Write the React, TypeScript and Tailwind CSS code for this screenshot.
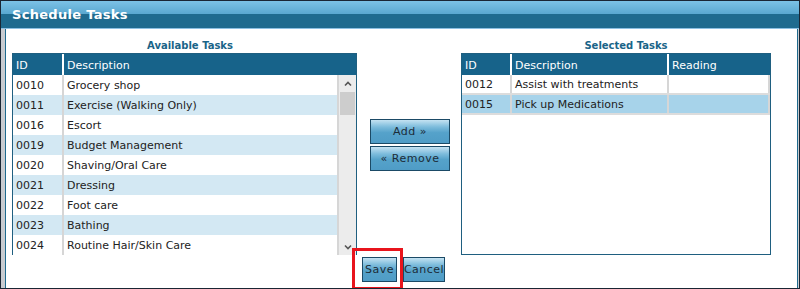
import React from 'react';

type Task = { id: string; desc: string };

const available: Task[] = [
  { id: '0010', desc: 'Grocery shop' },
  { id: '0011', desc: 'Exercise (Walking Only)' },
  { id: '0016', desc: 'Escort' },
  { id: '0019', desc: 'Budget Management' },
  { id: '0020', desc: 'Shaving/Oral Care' },
  { id: '0021', desc: 'Dressing' },
  { id: '0022', desc: 'Foot care' },
  { id: '0023', desc: 'Bathing' },
  { id: '0024', desc: 'Routine Hair/Skin Care' },
];

const selected: Task[] = [
  { id: '0012', desc: 'Assist with treatments' },
  { id: '0015', desc: 'Pick up Medications' },
];

const btn =
  'h-[25px] border border-[#1b4a66] bg-[linear-gradient(to_bottom,#c4e2f2_0%,#7dbcdc_30%,#55a2ca_55%,#4f9cc6_100%)] text-[11px] text-[#1c2c38] tracking-[0.5px] flex items-center justify-center pt-[1px]';

const cell = 'flex items-center pl-[3px] pt-[2px]';
const headCell = 'flex items-center pl-[3px] pt-[3px]';

const App: React.FC = () => {
  return (
    <div className="w-[800px] h-[289px] bg-white border border-[#1a2634] flex flex-col font-['DejaVu_Sans',sans-serif] overflow-hidden">
      <div className="h-[28px] shrink-0 bg-[linear-gradient(to_bottom,#7cc2e6_0%,#5aa8d0_48%,#1f6b8f_49%,#1f6b8f_100%)] border-b border-[#8cc0e2] flex items-center pl-[11px] pt-[1px]">
        <span className="text-white font-bold text-[13px] tracking-[0.3px]">Schedule Tasks</span>
      </div>

      <div className="flex-1 flex border-l-4 border-r border-[#c8cbd0]">
        <div className="flex-1 border-l border-r border-[#1e6a8e] flex flex-col pt-[8px]">
          <div className="flex">
            {/* Available tasks */}
            <div className="ml-[6px] w-[345px] flex flex-col">
              <div className="h-[16px] text-center text-[10px] font-bold text-[#1a6488] leading-[16px] pl-[11px] pt-[1px]">Available Tasks</div>
              <div className="h-[202px] border border-[#1f5f80] flex flex-col">
                <div className="h-[21px] shrink-0 bg-[#17638a] flex text-white text-[11px]">
                  <div className={`w-[51px] border-r-2 border-white ${headCell}`}>ID</div>
                  <div className={`flex-1 ${headCell}`}>Description</div>
                </div>
                <div className="flex-1 flex">
                  <div className="flex-1">
                    {available.map((t, i) => (
                      <div key={t.id} className={`h-[20px] flex text-[11px] text-[#222] ${i % 2 === 1 ? 'bg-[#d3e8f3]' : 'bg-white'}`}>
                        <div className={`w-[51px] border-r-2 border-[#d6d6d6] ${cell}`}>{t.id}</div>
                        <div className={`flex-1 border-r-2 border-[#d6d6d6] ${cell}`}>{t.desc}</div>
                      </div>
                    ))}
                  </div>
                  <div className="w-[17px] bg-[#ececec] flex flex-col items-center">
                    <svg width="10" height="10" viewBox="0 0 10 10" className="mt-[4px]">
                      <path d="M2 6.5 L5 3.5 L8 6.5" stroke="#555" strokeWidth="1.6" fill="none" />
                    </svg>
                    <div className="w-[15px] h-[23px] bg-[#cdcdcd] mt-[3px]" />
                    <div className="flex-1" />
                    <svg width="10" height="10" viewBox="0 0 10 10" className="mb-[3px]">
                      <path d="M2 3.5 L5 6.5 L8 3.5" stroke="#555" strokeWidth="1.6" fill="none" />
                    </svg>
                  </div>
                </div>
              </div>
            </div>

            {/* Middle buttons */}
            <div className="w-[104px] flex flex-col items-center pt-[82px] gap-[2px] pl-[2px]">
              <button className={`${btn} w-[80px]`}>Add »</button>
              <button className={`${btn} w-[80px]`}>« Remove</button>
            </div>

            {/* Selected tasks */}
            <div className="w-[310px] flex flex-col">
              <div className="h-[16px] text-center text-[10px] font-bold text-[#1a6488] leading-[16px] pl-[20px] pt-[1px]">Selected Tasks</div>
              <div className="h-[202px] border border-[#1f5f80] flex flex-col">
                <div className="h-[21px] shrink-0 bg-[#17638a] flex text-white text-[11px]">
                  <div className={`w-[50px] border-r-2 border-white ${headCell}`}>ID</div>
                  <div className={`w-[157px] border-r-2 border-white ${headCell}`}>Description</div>
                  <div className={`flex-1 ${headCell}`}>Reading</div>
                </div>
                {selected.map((t, i) => (
                  <div key={t.id} className={`h-[20px] flex text-[11px] text-[#222] border-b-2 border-[#dcdcdc] ${i === 1 ? 'bg-[#a7d3ea]' : 'bg-white'}`}>
                    <div className={`w-[50px] border-r-2 border-[#d6d6d6] ${cell}`}>{t.id}</div>
                    <div className={`w-[157px] border-r-2 border-[#d6d6d6] ${cell}`}>{t.desc}</div>
                    <div className="flex-1 border-r-2 border-[#d6d6d6]" />
                  </div>
                ))}
              </div>
            </div>
          </div>

          <div className="flex justify-center gap-[6px] mt-[2px] pl-[4px]">
            <div className="relative">
              <button className={`${btn} w-[35px]`}>Save</button>
              <div className="absolute left-[-10px] top-[-9px] w-[51px] h-[42px] border-[3px] border-[#e8141c]" />
            </div>
            <button className={`${btn} w-[42px]`}>Cancel</button>
          </div>
        </div>
      </div>
    </div>
  );
};

export default App;
